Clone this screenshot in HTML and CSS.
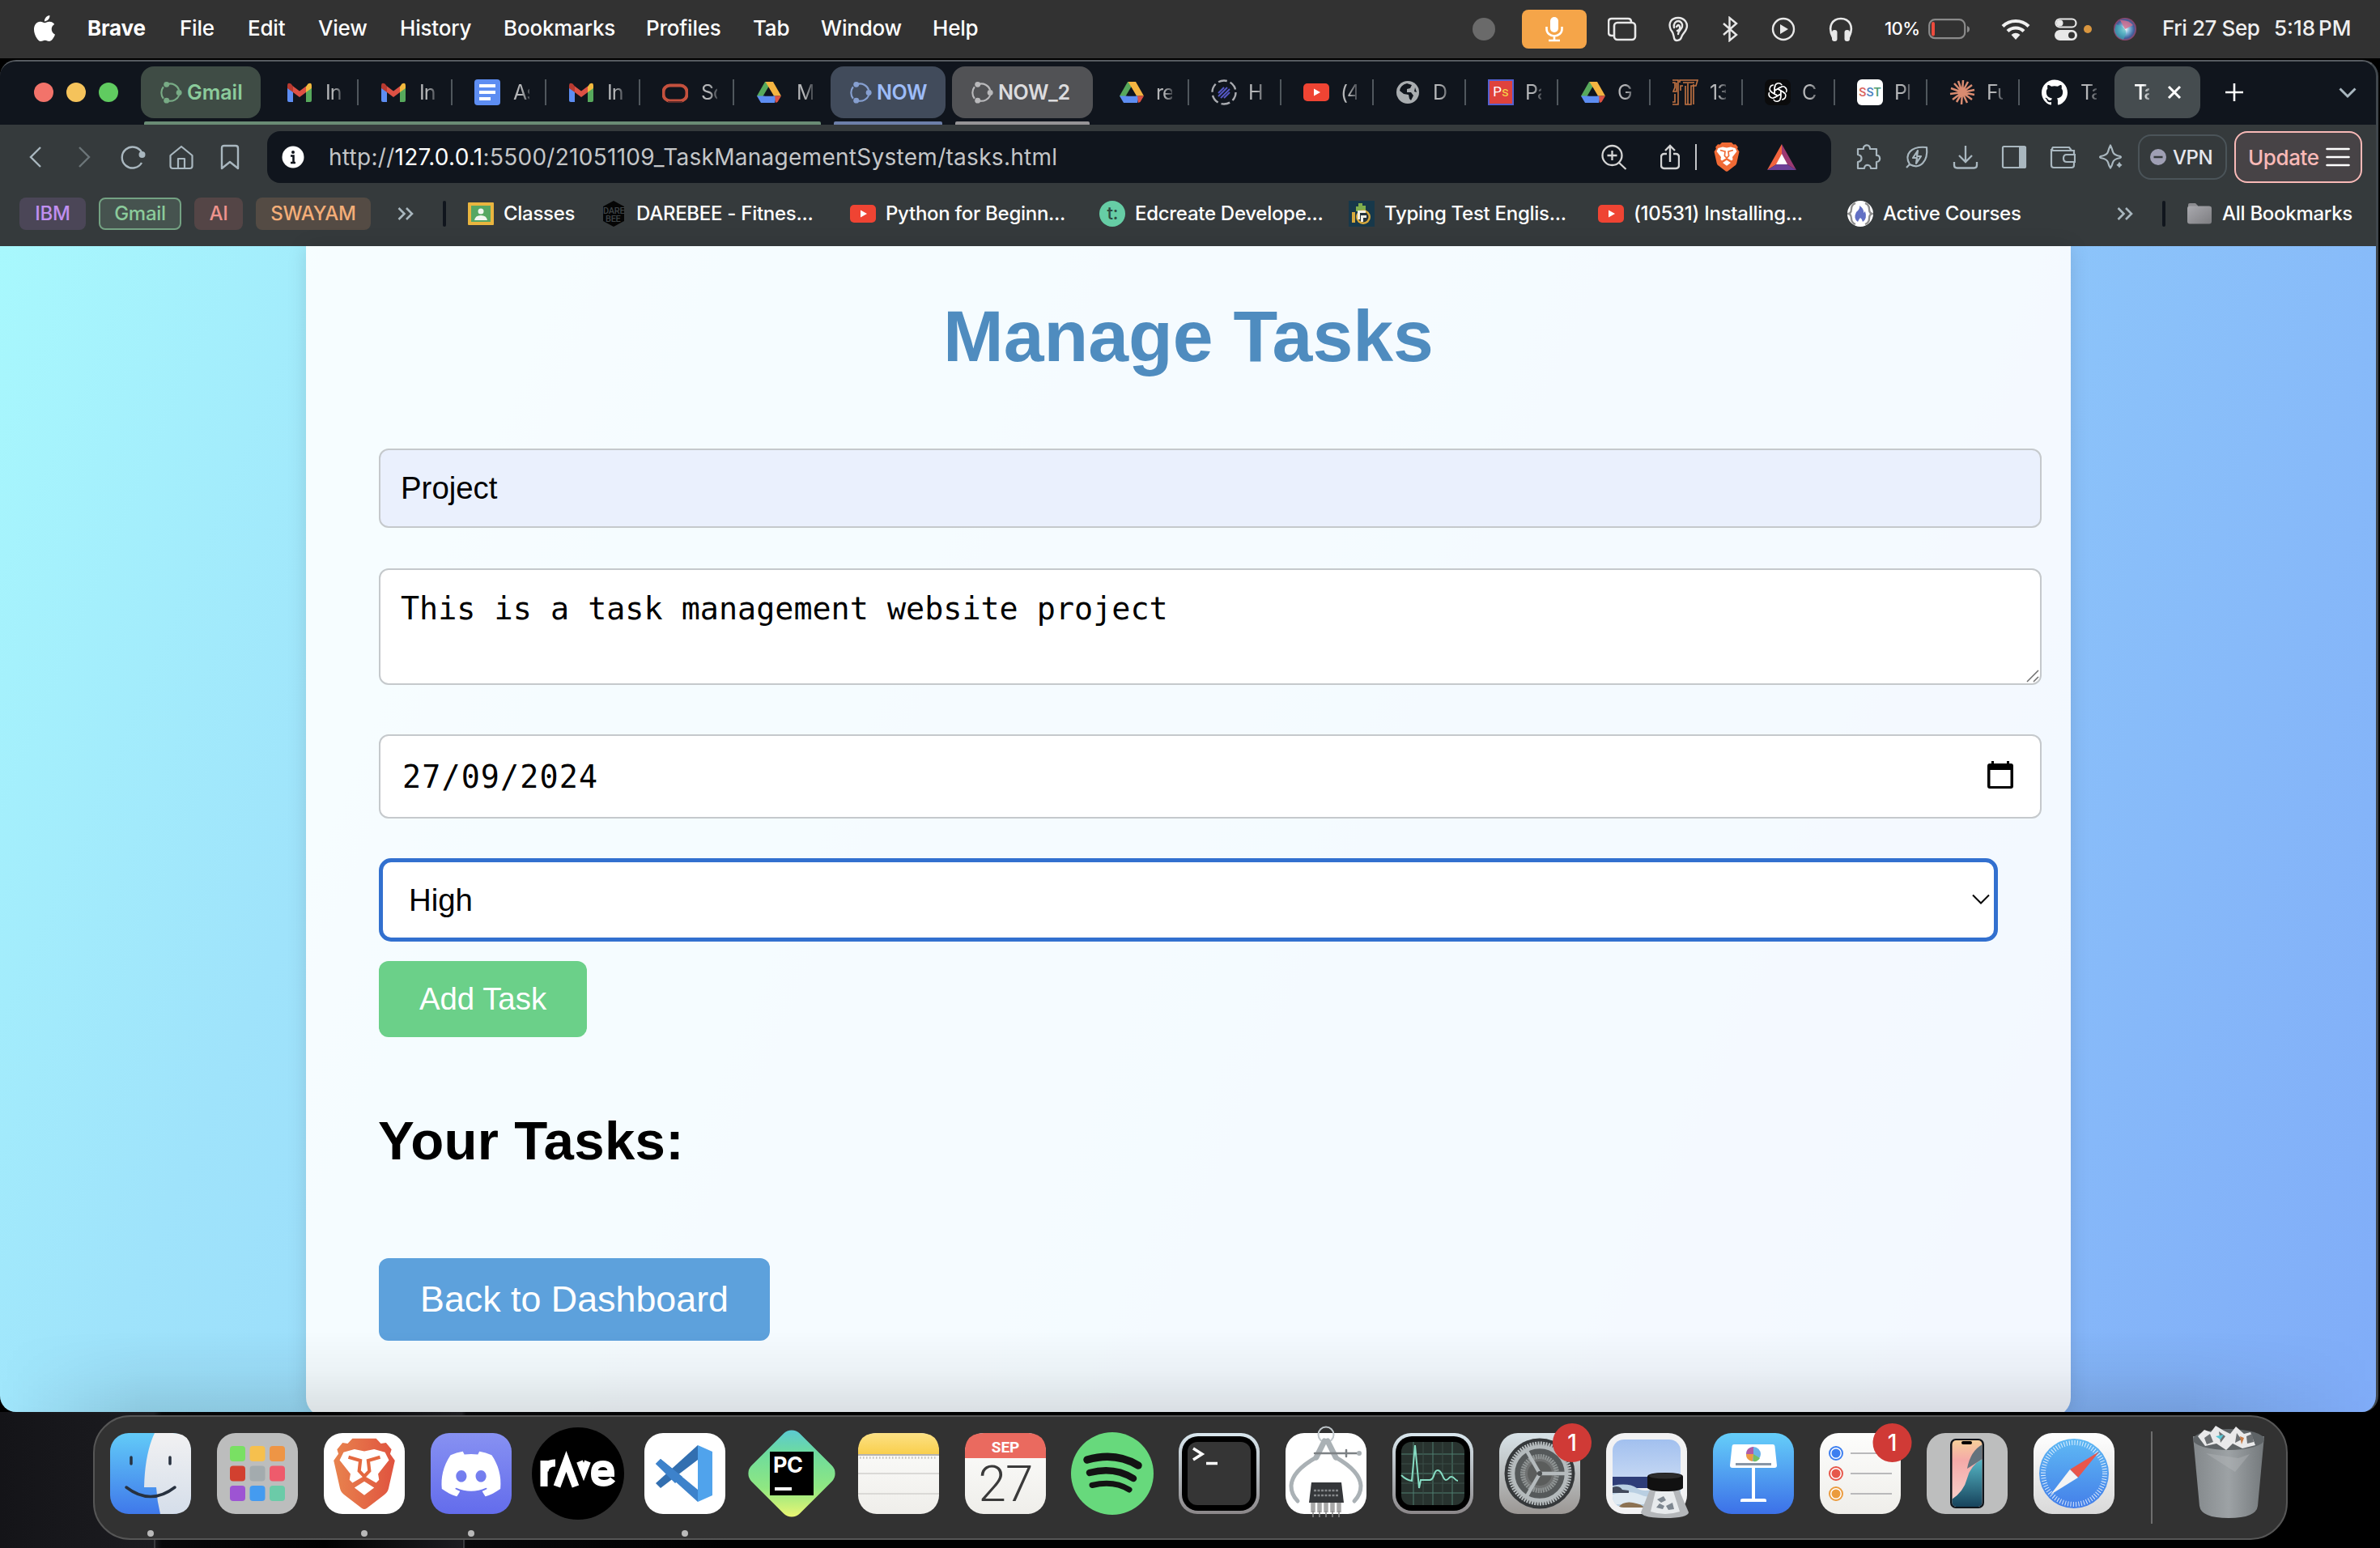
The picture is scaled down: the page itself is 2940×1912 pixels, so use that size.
FILE: index.html
```html
<!DOCTYPE html>
<html lang="en">
<head>
<meta charset="utf-8">
<title>Manage Tasks</title>
<link rel="stylesheet" href="styles.css">
</head>
<body>
<svg class="defs" width="0" height="0">
  <defs>
    <linearGradient id="gLion" x1="0" x2="1"><stop offset="0" stop-color="#e8834e"/><stop offset="1" stop-color="#e0533f"/></linearGradient>
    <linearGradient id="gFinder" x2="0" y2="1"><stop offset="0" stop-color="#62cbf8"/><stop offset="1" stop-color="#3f78ea"/></linearGradient>
    <linearGradient id="gFace" x2="0" y2="1"><stop offset="0" stop-color="#f1f1f2"/><stop offset="1" stop-color="#d5deea"/></linearGradient>
    <linearGradient id="gDiscord" x2="0" y2="1"><stop offset="0" stop-color="#8791f2"/><stop offset="1" stop-color="#636cec"/></linearGradient>
    <linearGradient id="gPy" x2="1" y2="1"><stop offset="0" stop-color="#57c6dc"/><stop offset=".3" stop-color="#6fdc9c"/><stop offset=".65" stop-color="#8fe782"/><stop offset="1" stop-color="#f9f871"/></linearGradient>
    <linearGradient id="gPaper" x2="0" y2="1"><stop offset="0" stop-color="#fdfdfc"/><stop offset="1" stop-color="#efeeea"/></linearGradient>
    <linearGradient id="gYellow" x2="0" y2="1"><stop offset="0" stop-color="#fce185"/><stop offset="1" stop-color="#f9cf4d"/></linearGradient>
    <linearGradient id="gRim" x2="0" y2="1"><stop offset="0" stop-color="#d9e7ee"/><stop offset="1" stop-color="#8b8789"/></linearGradient>
    <linearGradient id="gSet" x2="0" y2="1"><stop offset="0" stop-color="#d8e3e8"/><stop offset="1" stop-color="#9b9794"/></linearGradient>
    <linearGradient id="gKey" x2="0" y2="1"><stop offset="0" stop-color="#65cef9"/><stop offset="1" stop-color="#3c70e8"/></linearGradient>
    <linearGradient id="gPhoneL" x2="0" y2="1"><stop offset="0" stop-color="#f6cf9a"/><stop offset=".3" stop-color="#f5aaa8"/><stop offset="1" stop-color="#f8d3cf"/></linearGradient>
    <linearGradient id="gPhoneR" x2="0" y2="1"><stop offset="0" stop-color="#56b7c6"/><stop offset="1" stop-color="#16415a"/></linearGradient>
    <linearGradient id="gSaf" x2="0" y2="1"><stop offset="0" stop-color="#5fb9f4"/><stop offset="1" stop-color="#447fe9"/></linearGradient>
    <linearGradient id="gSafBg" x2="0" y2="1"><stop offset="0" stop-color="#fff"/><stop offset="1" stop-color="#d9d9d9"/></linearGradient>
    <linearGradient id="gBin" x1="0" x2="1"><stop offset="0" stop-color="#83888b"/><stop offset=".5" stop-color="#9da2a5"/><stop offset="1" stop-color="#74797c"/></linearGradient>
    <linearGradient id="gSky" x2="0" y2="1"><stop offset="0" stop-color="#a2c0ef"/><stop offset="1" stop-color="#c4d7f3"/></linearGradient>
    <linearGradient id="gFolder" x1="0" x2="1" y2="1"><stop offset="0" stop-color="#a9a9ae"/><stop offset="1" stop-color="#7d7d81"/></linearGradient>
    <radialGradient id="gSiri"><stop offset="0" stop-color="#fff"/><stop offset=".4" stop-color="#7fb4d8"/><stop offset=".8" stop-color="#3f5f9b"/><stop offset="1" stop-color="#9a4368"/></radialGradient>
  </defs>
  <symbol id="lion" viewBox="0 0 32 36">
    <path d="M10 0h12l2.400 2.600L27 2.200l2.800 3.400-.7 2.200 2.400 3.400-3.200 14.200c-.4 1.600-1.200 2.500-2.400 3.400L17.200 35.400c-.8.6-1.600.6-2.400 0L6.100 28.800c-1.200-.9-2-1.800-2.400-3.400L.5 11.200l2.400-3.400-.7-2.200L5 2.200l2.600.4z"/>
    <path fill="#fff" d="M11 5.500l5 1 5-1 5.500 1.500 2 4-5.500 7 .5 3-1.500 1.500-6-3.500-6 3.500L8.500 21l.5-3-5.500-7 2-4zM11 25l5-3.200L21 25l-5 3.800z"/>
    <path fill="none" stroke="currentColor" stroke-width="1.700" d="M8 9.500l6 1.700-.6 5.300L16 19.200l2.600-2.700-.6-5.300 6-1.700M16 19v2"/>
  </symbol>
  <symbol id="gmail" viewBox="0 0 30 24"><path fill="#5d8df2" d="M0 4v18q0 2 2 2h5V10z"/><path fill="#57a95c" d="M30 4v18q0 2-2 2h-5V10z"/><path fill="#f3b93d" d="M23 5l2.500-3.500Q30-1 30 4l-.1 3L23 12z"/><path fill="#dd5144" d="M7 12V4.500l8 6 8-6V12l-8 6z"/><path fill="#b83a30" d="M0 4Q0-1 4.500 1.500L7 4.500V12L0 7z"/></symbol>
  <symbol id="docs" viewBox="0 0 32 32"><rect width="32" height="32" rx="4" fill="#5d8df2"/><path stroke="#fff" stroke-width="4" d="M6 8h20M6 16h20M6 24h14"/></symbol>
  <symbol id="oracle" viewBox="0 0 32 32"><rect x="1.500" y="7.500" width="29" height="19" rx="8" fill="none" stroke="#c4513e" stroke-width="4"/><path d="M7 28h18" stroke="#5c2b29" stroke-width="2"/></symbol>
  <symbol id="drive" viewBox="0 0 30 26"><path fill="#57a95c" d="M10 0h8L5 22 0 17.500z"/><path fill="#f4b441" d="M10.500 0H20l10 17.500h-9z"/><path fill="#5d8df2" d="M0 17.500h24L22 26H5z"/><path fill="#dd5144" d="M22 17.500h8L25.500 25 23 26z"/><path fill="#10151d" d="M15 8l5 9.500H9.500z"/></symbol>
  <symbol id="ring" viewBox="0 0 28 28"><g fill="none" stroke="currentColor" stroke-width="2.200"><path d="M9.500 3.500A12 12 0 0 1 24 11M24 18a12 12 0 0 1-13 7M4 22A12 12 0 0 1 4 7"/></g><g fill="currentColor"><circle cx="8" cy="4" r="3.600"/><circle cx="24" cy="14.500" r="3.600"/><circle cx="8" cy="24.500" r="3.600"/></g></symbol>
  <symbol id="dash" viewBox="0 0 32 32"><circle cx="16" cy="16" r="14.500" fill="none" stroke="#a9abb0" stroke-width="2.400" stroke-dasharray="11 4.180"/><path d="M9 17l7-7M9 21L20 10M12 23L23 12M16 23l7-7" stroke="#5457c4" stroke-width="2"/></symbol>
  <symbol id="yt" viewBox="0 0 32 22"><rect width="32" height="22" rx="5" fill="#ef4433"/><path fill="#fff" d="M13 6.500l8 4.500-8 4.500z"/></symbol>
  <symbol id="globe" viewBox="0 0 28 28"><circle cx="14" cy="14" r="14" fill="#a9adb0"/><path fill="#10151d" d="M13 3l6 2-2 4-4 1v4l5 0 3 4-3 6-2-2-1-5-6-1-5-4q1-7 9-9zM23 8l2 6-3-1z"/></symbol>
  <symbol id="it" viewBox="0 0 32 32"><path fill="none" stroke="#c37443" stroke-width="1.600" d="M0 1h7v30H0M0 4h3v6l-2 5h4V4M3 18v10H0M10 14V8h3M9 4V1h22l-2 7h-6v23h-7V8M13 4h14M19 31V5M26 6v25"/></symbol>
  <symbol id="gpt" viewBox="0 0 32 32"><rect width="32" height="32" rx="7" fill="#0b0b0c"/><g fill="none" stroke="#fff" stroke-width="1.500" stroke-linecap="round"><path id="petal" d="M12.300 18.100V9.500a4.800 4.800 0 0 1 8.600-2.900M12.300 13.800l6.300-3.700a4.800 4.800 0 0 1 2.300-.6"/><use href="#petal" transform="rotate(60 16 16)"/><use href="#petal" transform="rotate(120 16 16)"/><use href="#petal" transform="rotate(180 16 16)"/><use href="#petal" transform="rotate(240 16 16)"/><use href="#petal" transform="rotate(300 16 16)"/></g></symbol>
  <symbol id="burst" viewBox="-16 -16 32 32"><path stroke="#d98b70" stroke-width="2.500" d="M0 0L1-15M0 0l7-13M0 0l12-9M0 0l15-3M0 0l15 3M0 0l12 9M0 0l6 13M0 0l-1 15M0 0l-7 12M0 0l-12 9M0 0l-15 2M0 0l-14-5M0 0L-10-11M0 0l-5-14"/></symbol>
  <symbol id="github" viewBox="0 0 24 24"><path fill="#fff" d="M12 .297c-6.63 0-12 5.373-12 12 0 5.303 3.438 9.8 8.205 11.385.6.113.82-.258.82-.577 0-.285-.01-1.040-.015-2.040-3.338.724-4.042-1.610-4.042-1.610C4.422 18.070 3.633 17.700 3.633 17.700c-1.087-.744.084-.729.084-.729 1.205.084 1.838 1.236 1.838 1.236 1.070 1.835 2.809 1.305 3.495.998.108-.776.417-1.305.760-1.605-2.665-.3-5.466-1.332-5.466-5.930 0-1.310.465-2.380 1.235-3.220-.135-.303-.540-1.523.105-3.176 0 0 1.005-.322 3.300 1.230.960-.267 1.980-.399 3-.405 1.020.006 2.040.138 3 .405 2.280-1.552 3.285-1.230 3.285-1.230.645 1.653.240 2.873.120 3.176.765.840 1.230 1.910 1.230 3.220 0 4.610-2.805 5.625-5.475 5.920.420.360.810 1.096.810 2.220 0 1.606-.015 2.896-.015 3.286 0 .315.210.690.825.570C20.565 22.092 24 17.592 24 12.297c0-6.627-5.373-12-12-12"/></symbol>
  <symbol id="more" viewBox="0 0 20 16"><path fill="none" stroke="#a9b7bf" stroke-width="2.600" d="M1.500 1l7 7-7 7M11 1l7 7-7 7"/></symbol>
</svg>

<header class="menubar">
  <svg class="apple" width="32" height="32" viewBox="0 0 24 24"><path fill="#fff" d="M12.152 6.896c-.948 0-2.415-1.078-3.960-1.040-2.040.027-3.910 1.183-4.961 3.014-2.117 3.675-.546 9.103 1.519 12.090 1.013 1.454 2.208 3.090 3.792 3.039 1.520-.065 2.090-.987 3.935-.987 1.831 0 2.350.987 3.960.948 1.637-.026 2.676-1.480 3.676-2.948 1.156-1.688 1.636-3.325 1.662-3.415-.039-.013-3.182-1.221-3.220-4.857-.026-3.040 2.480-4.494 2.597-4.559-1.429-2.090-3.623-2.324-4.390-2.376-2-.156-3.675 1.090-4.610 1.090zM15.530 3.830c.843-1.012 1.400-2.427 1.245-3.830-1.207.052-2.662.805-3.532 1.818-.780.896-1.454 2.338-1.273 3.714 1.338.104 2.715-.688 3.559-1.701"/></svg>
  <b>Brave</b><span>File</span><span>Edit</span><span>View</span><span>History</span><span>Bookmarks</span><span>Profiles</span><span>Tab</span><span>Window</span><span>Help</span>
  <i class="idle"></i>
  <div class="mic"><svg width="26" height="32" viewBox="0 0 26 32"><rect x="8" y="1" width="10" height="19" rx="5" fill="#fff"/><path fill="none" stroke="#fff" stroke-width="2.600" d="M3.500 13v3a9.500 8.500 0 0 0 19 0v-3M13 24v6M6 30h14"/></svg></div>
  <svg width="36" height="30" viewBox="0 0 36 30"><g fill="none" stroke="#e8e8e8" stroke-width="2.600"><path d="M7 23H5q-4 0-4-4V6q0-4 4-4h20q4 0 4 4"/><rect x="8" y="7" width="26" height="21" rx="4"/></g></svg>
  <svg width="26" height="32" viewBox="0 0 26 32"><g fill="none" stroke="#e8e8e8" stroke-width="2.400" stroke-linecap="round"><path d="M4 17C0 8 5 2 13 2s13 7 10 14c-2 5-5 6-6 10s-8 6-9 1-1-7-4-10"/><path d="M8 14c-1-5 2-8 5-8s6 3 5 7-5 5-5 9M11 13q3-4 4 0t-3 5"/></g></svg>
  <svg width="24" height="32" viewBox="0 0 24 32"><path fill="none" stroke="#e8e8e8" stroke-width="2.400" d="M4 9l16 14-8.500 7V2L20 9 4 23"/></svg>
  <svg width="30" height="30" viewBox="0 0 30 30"><circle cx="15" cy="15" r="13" fill="none" stroke="#e8e8e8" stroke-width="2.400"/><path fill="#e8e8e8" d="M11 9l10 6-10 6z"/></svg>
  <svg width="30" height="32" viewBox="0 0 30 32"><path fill="none" stroke="#e8e8e8" stroke-width="2.600" d="M5 26C-2 12 5 3 15 3s17 9 10 23"/><rect x="4" y="17" width="6.500" height="14" rx="3" fill="#e8e8e8"/><rect x="19.500" y="17" width="6.500" height="14" rx="3" fill="#e8e8e8"/></svg>
  <span class="pct">10%</span>
  <svg width="52" height="26" viewBox="0 0 52 26"><rect x="1.200" y="1.200" width="44" height="23" rx="7" fill="none" stroke="#8b8b8b" stroke-width="2.200"/><rect x="4" y="4" width="4" height="17.500" rx="2" fill="#ed4b3d"/><path d="M48 9q3 1 3 4t-3 4z" fill="#8b8b8b"/></svg>
  <svg width="36" height="28" viewBox="0 0 36 28"><g fill="none" stroke="#f0f0f0" stroke-width="4.200"><path d="M2 10.500a23 23 0 0 1 32 0M8 16.500a14.500 14.500 0 0 1 20 0"/></g><path fill="#f0f0f0" d="M12.500 21q5.500-4.500 11 0L18 27z"/></svg>
  <svg width="28" height="30" viewBox="0 0 28 30"><rect x="1.500" y="2.500" width="25" height="10" rx="5" fill="none" stroke="#e8e8e8" stroke-width="2.200"/><circle cx="6.500" cy="7.500" r="4" fill="#e8e8e8"/><rect y="16" width="28" height="13" rx="6.500" fill="#e8e8e8"/><circle cx="21" cy="22.500" r="4" fill="#323232"/></svg>
  <i class="amber"></i>
  <svg width="28" height="28" viewBox="0 0 28 28"><circle cx="14" cy="14" r="14" fill="url(#gSiri)"/><path d="M3 8q8 2 11 6T12 27Q2 24 1 15z" fill="#3fb0b5" opacity=".6"/><path d="M8 3q10-1 16 6l-10 5z" fill="#d66b8c" opacity=".8"/></svg>
  <span class="clock">Fri 27 Sep</span><span class="clock time">5:18 PM</span>
</header>

<main class="window">
  <div class="tabstrip">
    <div class="lights"><i></i><i></i><i></i></div>
    <div class="pill green"><svg width="27" height="28"><use href="#ring"/></svg>Gmail</div>
    <div class="tabs first">
      <div class="tab"><svg width="30" height="24"><use href="#gmail"/></svg><span>In</span></div>
      <div class="tab"><svg width="30" height="24"><use href="#gmail"/></svg><span>In</span></div>
      <div class="tab"><svg width="32" height="32"><use href="#docs"/></svg><span>As</span></div>
      <div class="tab"><svg width="30" height="24"><use href="#gmail"/></svg><span>In</span></div>
      <div class="tab"><svg width="32" height="32"><use href="#oracle"/></svg><span>Sc</span></div>
      <div class="tab"><svg width="30" height="26"><use href="#drive"/></svg><span>M</span></div>
    </div>
    <div class="pill blue"><svg width="27" height="28"><use href="#ring"/></svg>NOW</div>
    <div class="pill grey"><svg width="27" height="28"><use href="#ring"/></svg>NOW_2</div>
    <div class="tabs second">
      <div class="tab"><svg width="30" height="26"><use href="#drive"/></svg><span>re</span></div>
      <div class="tab"><svg width="32" height="32"><use href="#dash"/></svg><span>H</span></div>
      <div class="tab"><svg width="32" height="22"><use href="#yt"/></svg><span>(4</span></div>
      <div class="tab"><svg width="28" height="28"><use href="#globe"/></svg><span>D</span></div>
      <div class="tab"><div class="ps"><em>P</em>s</div><span>Pa</span></div>
      <div class="tab"><svg width="30" height="26"><use href="#drive"/></svg><span>G</span></div>
      <div class="tab"><svg width="32" height="32"><use href="#it"/></svg><span>13</span></div>
      <div class="tab"><svg width="32" height="32"><use href="#gpt"/></svg><span>C</span></div>
      <div class="tab"><div class="sst"><b>S</b><b>S</b><b>T</b></div><span>Pl</span></div>
      <div class="tab"><svg width="32" height="32"><use href="#burst"/></svg><span>Fu</span></div>
      <div class="tab"><svg width="32" height="32"><use href="#github"/></svg><span>Ta</span></div>
    </div>
    <div class="active"><span>Ta</span><svg width="18" height="18" viewBox="0 0 18 18"><path stroke="#fff" stroke-width="3" d="M2 2l14 14M16 2L2 16"/></svg></div>
    <svg class="plus" width="22" height="22" viewBox="0 0 22 22"><path stroke="#fff" stroke-width="2.600" d="M11 0v22M0 11h22"/></svg>
    <svg class="caret" width="22" height="14" viewBox="0 0 22 14"><path fill="none" stroke="#a9b7bf" stroke-width="3" d="M1.500 1.500L11 11l9.500-9.500"/></svg>
  </div>

  <div class="toolbar">
    <svg width="32" height="32" viewBox="0 0 32 32"><path fill="none" stroke="#a9b7bf" stroke-width="2.400" d="M22 4L10 16l12 12"/></svg>
    <svg width="32" height="32" viewBox="0 0 32 32"><path fill="none" stroke="#6c7579" stroke-width="2.400" d="M10 4l12 12-12 12"/></svg>
    <svg width="32" height="32" viewBox="0 0 32 32"><path fill="none" stroke="#a9b7bf" stroke-width="2.400" d="M27 10A13 13 0 1 0 27 23"/><circle cx="27.500" cy="13" r="4" fill="#a9b7bf"/></svg>
    <svg width="32" height="32" viewBox="0 0 32 32"><path fill="none" stroke="#a9b7bf" stroke-width="2.200" stroke-linejoin="round" d="M2.500 14L16 3l13.500 11v13q0 3-3 3h-21q-3 0-3-3zM12 30V18h8v12"/></svg>
    <svg width="32" height="32" viewBox="0 0 32 32"><path fill="none" stroke="#a9b7bf" stroke-width="2.400" stroke-linejoin="round" d="M6 30V5q0-3 3-3h14q3 0 3 3v25l-10-8z"/></svg>
    <div class="urlbar">
      <svg width="28" height="28" viewBox="0 0 28 28"><circle cx="14" cy="14" r="13.500" fill="#fff"/><circle cx="14" cy="8" r="2" fill="#10151d"/><path fill="none" stroke="#10151d" stroke-width="2.600" d="M11 12.500h3.500V21M11 21h6"/></svg>
      <span class="url">http://<b>127.0.0.1</b>:5500/21051109_TaskManagementSystem/tasks.html</span>
      <svg width="32" height="32" viewBox="0 0 32 32"><g fill="none" stroke="#d4d4d4" stroke-width="2.300"><circle cx="13.500" cy="14" r="12"/><path d="M22 23l8.500 8M7.500 14h12M13.500 8v12"/></g></svg>
      <svg width="24" height="32" viewBox="0 0 24 32"><path fill="none" stroke="#d4d4d4" stroke-width="2.400" d="M8 12H5q-4 0-4 4v10q0 4 4 4h14q4 0 4-4V16q0-4-4-4h-3M12 22V2M6 8l6-6 6 6"/></svg>
      <i class="sep"></i>
      <svg class="lion" width="32" height="36"><use href="#lion"/></svg>
      <svg width="36" height="32" viewBox="0 0 36 32"><path fill="#f2643e" d="M18 0v13L11.500 25 0 32z"/><path fill="#9c3a73" d="M18 0l18 32-11.500-7L18 13z"/><path fill="#6c4197" d="M0 32l11.500-7h13L36 32z"/><path fill="#fff" d="M18 12l7 13H11z"/></svg>
    </div>
    <svg width="32" height="32" viewBox="0 0 32 32"><path fill="none" stroke="#a9b7bf" stroke-width="2.200" stroke-linejoin="round" d="M3 6h7c-1-5 7-7 8-1v1h8v8c5-1 6 8 0 8v8h-7c0-5-8-6-8 0H3v-8c6-1 6-8 0-9z"/></svg>
    <svg width="32" height="32" viewBox="0 0 32 32"><path fill="none" stroke="#a9b7bf" stroke-width="2.200" stroke-linejoin="round" d="M3 29l4-4C0 13 8 2 28 4c2 17-8 28-21 21M17 8l-6 9h5l-1 7 6-9h-5z"/></svg>
    <svg width="32" height="32" viewBox="0 0 32 32"><path fill="none" stroke="#a9b7bf" stroke-width="2.300" d="M16 2v19M8 14l8 8 8-8M2 22v4q0 3.500 3.500 3.500h21Q30 29.500 30 26v-4"/></svg>
    <svg width="32" height="32" viewBox="0 0 32 32"><rect x="2" y="3" width="28" height="26" rx="1.500" fill="none" stroke="#a9b7bf" stroke-width="2.200"/><path fill="#a9b7bf" d="M22 3h9v26h-9z"/></svg>
    <svg width="32" height="32" viewBox="0 0 32 32"><g fill="none" stroke="#a9b7bf" stroke-width="2.200"><path d="M30 12V8H4q-2-2 0-4h20l3 4M2 6v20q0 3 3 3h22q3 0 3-3v-4"/><path d="M31 13H21q-4 0-4 4.500t4 4.500h10z"/></g></svg>
    <svg width="32" height="32" viewBox="0 0 32 32"><path fill="none" stroke="#a9b7bf" stroke-width="2.200" stroke-linejoin="round" d="M15 1.500q2 4 3 8t9 5.500q2 1 0 2-8 1.500-9 5.500t-3 7q-2-3-3-7T3 17q-2-1 0-2 8-1.500 9-5.500t3-8z"/><path fill="#a9b7bf" stroke="#353a3c" stroke-width="1.500" d="M26 19q1 6 6 7-5 1-6 6-1-5-6-6 5-1 6-7z"/></svg>
    <div class="vpn"><svg width="20" height="20" viewBox="0 0 20 20"><circle cx="10" cy="10" r="10" fill="#9f9fb4"/><path d="M4.500 10h11" stroke="#353a3c" stroke-width="2.400"/></svg>VPN</div>
    <div class="update">Update<svg width="30" height="24" viewBox="0 0 30 24"><path stroke="#fff" stroke-width="2.600" stroke-linecap="round" d="M1.500 2h27M1.500 12h27M1.500 22h27"/></svg></div>
  </div>

  <div class="bookmarks">
    <span class="tag ibm">IBM</span><span class="tag gm">Gmail</span><span class="tag ai">AI</span><span class="tag sw">SWAYAM</span>
    <svg width="20" height="16"><use href="#more"/></svg>
    <i></i>
    <a><svg width="32" height="28" viewBox="0 0 32 28"><rect width="32" height="28" rx="1" fill="#e9b53f"/><rect x="4" y="4" width="24" height="20" fill="#56a763"/><circle cx="16" cy="11" r="3.500" fill="#f1f6f1"/><path fill="#f1f6f1" d="M8 22q1-6 8-6t8 6z"/></svg>Classes</a>
    <a><svg width="32" height="32" viewBox="0 0 32 32"><path fill="#050505" d="M16 0l13 7v18l-13 7-13-7V7z"/><g font-family="Roboto, sans-serif" font-size="11" fill="#3d4346"><text x="3" y="16">DARE</text><text x="6" y="26">BEE</text></g></svg>DAREBEE - Fitnes...</a>
    <a><svg width="32" height="22"><use href="#yt"/></svg>Python for Beginn...</a>
    <a><svg width="32" height="32" viewBox="0 0 32 32"><circle cx="16" cy="16" r="16" fill="#66cda5"/><text x="9.500" y="23" font-family="Inter, sans-serif" font-size="22" fill="#2d4a40">t:</text></svg>Edcreate Develope...</a>
    <a><svg width="32" height="32" viewBox="0 0 32 32"><path fill="#17384a" d="M0 0h32v32H0z"/><path fill="#7fae4d" d="M9 13V7h3V3h5v3h4v7z"/><path fill="#d8a93c" d="M4 14h4v13H4z"/><circle cx="18" cy="20" r="9" fill="#d8a93c"/><circle cx="18" cy="20" r="6.500" fill="#24323a"/><path fill="#f2efe5" d="M11 12h3v11h-3zM14 12h7v3h-7zM15 18h7v3h-4v5h-3z"/></svg>Typing Test Englis...</a>
    <a><svg width="32" height="22"><use href="#yt"/></svg>(10531) Installing...</a>
    <a><svg width="32" height="32" viewBox="0 0 32 32"><circle cx="16" cy="16" r="16" fill="#fff"/><path fill="none" stroke="#8d8d8d" stroke-width="2.400" d="M10 3Q5 5 5 10t-3.500 6Q5 17 5 22t5 7M22 3q5 2 5 7t3.500 6Q27 17 27 22t-5 7"/><path fill="#6270c4" d="M15 6q6 4 5 9l2-2q3 9-3 13-1-4-3-5-2 2-3 5-6-4-2-12 5-4 4-8z"/></svg>Active Courses</a>
    <svg width="20" height="16"><use href="#more"/></svg>
    <i></i>
    <a class="all"><svg width="30" height="26" viewBox="0 0 30 26"><path fill="#8b8b8f" d="M1 2q0-2 2-2h7l3 3v4H1z"/><rect y="3.500" width="30" height="22" rx="3" fill="url(#gFolder)"/></svg>All Bookmarks</a>
  </div>

  <section class="page">
    <div class="card">
      <h1>Manage Tasks</h1>
      <input class="field name" type="text" value="Project">
      <div class="area">
        <textarea class="field">This is a task management website project</textarea>
        <svg width="16" height="16" viewBox="0 0 16 16"><path stroke="#6d6d6d" stroke-width="1.500" d="M1 15L15 1M9 15l6-6"/></svg>
      </div>
      <div class="field date"><span>27/09/2024</span><svg width="32" height="36" viewBox="0 0 32 36"><path d="M5 0h3v3h16V0h3v3h2q3 0 3 3v25q0 3-3 3H3q-3 0-3-3V6q0-3 3-3h2zM3.500 11v20h25V11z"/></svg></div>
      <div class="field select"><span>High</span><svg width="22" height="14" viewBox="0 0 22 14"><path fill="none" stroke="#000" stroke-width="2" d="M1 1.500l10 10 10-10"/></svg></div>
      <button class="add">Add Task</button>
      <h2>Your Tasks:</h2>
      <a class="back">Back to Dashboard</a>
    </div>
  </section>
</main>

<footer class="desktop">
  <nav class="dock">
    <svg viewBox="-66 -70 132 150"><rect x="-50" y="-50" width="100" height="100" rx="23" fill="url(#gFinder)"/><path fill="url(#gFace)" d="M5-50h22q23 0 23 23v54q0 23-23 23H12Q8 34 7 17H-8Q-7-25 5-50z"/><path fill="none" stroke="#27313f" stroke-width="3.500" stroke-linecap="round" d="M-24-20v8M24-20v8M-30 17Q0 40 30 17"/><circle class="run" cy="74" r="4"/></svg>
    <svg viewBox="-66 -70 132 150"><rect x="-50" y="-50" width="100" height="100" rx="23" fill="#bcbdbd"/><rect x="-34" y="-34" width="19" height="19" rx="4" fill="#79e063"/><rect x="-9.500" y="-34" width="19" height="19" rx="4" fill="#f6c04e"/><rect x="15" y="-34" width="19" height="19" rx="4" fill="#ee9545"/><rect x="-34" y="-9.500" width="19" height="19" rx="4" fill="#d2402f"/><rect x="-9.500" y="-9.500" width="19" height="19" rx="4" fill="#a3abae"/><rect x="15" y="-9.500" width="19" height="19" rx="4" fill="#ee5b6c"/><rect x="-34" y="15" width="19" height="19" rx="4" fill="#9d54d3"/><rect x="-9.500" y="15" width="19" height="19" rx="4" fill="#449bf0"/><rect x="15" y="15" width="19" height="19" rx="4" fill="#6bcba8"/></svg>
    <svg viewBox="-66 -70 132 150"><rect x="-50" y="-50" width="100" height="100" rx="23" fill="#fff"/><g fill="url(#gLion)" color="#e4683f"><use href="#lion" x="-39" y="-44" width="78" height="89"/></g><circle class="run" cy="74" r="4"/></svg>
    <svg viewBox="-66 -70 132 150"><rect x="-50" y="-50" width="100" height="100" rx="23" fill="url(#gDiscord)"/><path fill="#fff" transform="translate(-36.500 -36) scale(3.040)" d="M20.317 4.370a19.791 19.791 0 0 0-4.885-1.515.074.074 0 0 0-.079.037c-.211.375-.445.865-.608 1.250-1.845-.276-3.680-.276-5.487 0-.164-.393-.406-.874-.618-1.250a.077.077 0 0 0-.079-.037 19.736 19.736 0 0 0-4.885 1.515.070.070 0 0 0-.032.028C.533 9.046-.319 13.580.099 18.058a.082.082 0 0 0 .031.056c2.053 1.508 4.041 2.423 5.993 3.029a.078.078 0 0 0 .084-.028c.462-.630.873-1.295 1.226-1.994a.076.076 0 0 0-.042-.106c-.653-.248-1.274-.550-1.872-.892a.077.077 0 0 1-.008-.128c.126-.094.252-.192.372-.291a.074.074 0 0 1 .078-.011c3.928 1.793 8.180 1.793 12.061 0a.074.074 0 0 1 .079.010c.120.099.246.198.373.292a.077.077 0 0 1-.007.128 12.299 12.299 0 0 1-1.873.891.077.077 0 0 0-.041.107c.360.698.772 1.363 1.225 1.993a.076.076 0 0 0 .084.029c1.961-.607 3.950-1.522 6.002-3.029a.077.077 0 0 0 .031-.055c.500-5.177-.838-9.674-3.549-13.660a.061.061 0 0 0-.031-.029zM8.020 15.331c-1.183 0-2.157-1.086-2.157-2.419 0-1.333.956-2.419 2.157-2.419 1.211 0 2.176 1.095 2.157 2.419 0 1.333-.956 2.419-2.157 2.419zm7.975 0c-1.183 0-2.157-1.086-2.157-2.419 0-1.333.955-2.419 2.157-2.419 1.211 0 2.176 1.095 2.157 2.419 0 1.333-.946 2.419-2.157 2.419z"/><circle class="run" cy="74" r="4"/></svg>
    <svg viewBox="-66 -70 132 150"><circle r="57" fill="#000"/><g fill="none" stroke="#fff" stroke-width="9"><path d="M-42-16v32M-41-3q1-10 13-10M-26 16l11.500-31L-3 16"/><path stroke-width="8" d="M2-15l5 13 5-13"/><path d="M21 0h20q0-12-10-12-11 0-11 12 0 12 12 12 7 0 11-5" stroke-width="8"/></g></svg>
    <svg viewBox="-66 -70 132 150"><rect x="-50" y="-50" width="100" height="100" rx="23" fill="#fff"/><path fill="#3d82cb" d="M-36-12l6-6 46 38v15z"/><path fill="#326fb0" d="M-36 12l6 6L16-17v-18z"/><path fill="#3d82cb" d="M-36-12l6-6 27 22-9 8z"/><path fill="#50a3ec" d="M16-35l18 8v54l-18 8z"/><circle class="run" cy="74" r="4"/></svg>
    <svg viewBox="-66 -70 132 150"><rect x="-42" y="-42" width="84" height="84" rx="14" fill="url(#gPy)" transform="rotate(45)"/><path d="M-27-27h54v54h-54z"/><text x="-23" y="-1" class="pc">PC</text><path fill="#fff" d="M-21 17H0v4h-21z"/></svg>
    <svg viewBox="-66 -70 132 150"><rect x="-50" y="-50" width="100" height="100" rx="23" fill="url(#gPaper)"/><path fill="url(#gYellow)" d="M-50-24v-3q0-23 23-23h54q23 0 23 23v3z"/><path stroke="#b5b3ae" stroke-width="2" d="M-50-23H50"/><path stroke="#c2c0bb" stroke-width="2.500" stroke-dasharray="1.500 2.500" d="M-48-19.500H48"/><path stroke="#dad9d6" stroke-width="2" d="M-50 0H50M-50 25H50"/></svg>
    <svg viewBox="-66 -70 132 150"><rect x="-50" y="-50" width="100" height="100" rx="23" fill="url(#gPaper)"/><path fill="#ea6a5f" d="M-50-19v-8q0-23 23-23h54q23 0 23 23v8z"/><text x="0" y="-26.500" class="mon">SEP</text><text x="0" y="34" class="day">27</text></svg>
    <svg viewBox="-66 -70 132 150"><circle r="51" fill="#67d97c"/><g fill="none" stroke="#131313" stroke-linecap="round"><path stroke-width="9.500" d="M-31-17Q4-27 32-10"/><path stroke-width="8.500" d="M-28-1Q2-9 26 6"/><path stroke-width="7" d="M-25 14.500Q2 8 21 20"/></g></svg>
    <svg viewBox="-66 -70 132 150"><rect x="-50" y="-50" width="100" height="100" rx="23" fill="url(#gRim)"/><rect x="-46" y="-46" width="92" height="92" rx="20"/><rect x="-39" y="-39" width="78" height="78" rx="12" fill="#353535"/><path fill="none" stroke="#fff" stroke-width="3.500" d="M-32-31l11 7-11 7M-16-12.500h14"/></svg>
    <svg viewBox="-66 -70 132 150"><rect x="-50" y="-50" width="100" height="100" rx="23" fill="#fff"/><g fill="none" stroke="#aab1b5" stroke-linecap="round"><circle cy="-48" r="9.500" stroke-width="2" stroke="#bfc6ca"/><path stroke-width="7" d="M-2-40l-10 20M2-40l10 20"/><path stroke-width="5" d="M-12-20q-30 17-31 35 0 11 8 19M12-20q30 17 31 35 0 11-8 19"/><path stroke-width="2.500" stroke="#7c8184" d="M-14-25H41M25-29v8"/></g><circle cx="41" cy="-25" r="3" fill="#aab1b5"/><path stroke="#a7a7a7" stroke-width="5.500" d="M-16 35v13M-8 35v13M0 35v13M8 35v13M16 35v13"/><path stroke="#8b8b8b" stroke-width="1.500" d="M-16 46v8M-8 46v8M0 46v8M8 46v8M16 46v8"/><path fill="#35373a" d="M-18 11h37l3 25h-43z"/><path stroke="#85878a" stroke-width="2.500" stroke-dasharray="3 1.500" d="M-15 21h31M-15 27h31"/></svg>
    <svg viewBox="-66 -70 132 150"><rect x="-50" y="-50" width="100" height="100" rx="23" fill="url(#gRim)"/><rect x="-46" y="-46" width="92" height="92" rx="20"/><rect x="-39" y="-39" width="78" height="78" rx="12" fill="#28332f"/><path stroke="#4f7f70" stroke-width="1" d="M-24-39v78M0-39v78M24-39v78M-39-24h78M-39 0h78M-39 24h78"/><path stroke="#3a4f48" stroke-width="1" d="M-12-39v78M12-39v78M-39-12h78M-39 12h78"/><path fill="none" stroke="#86dcc3" stroke-width="2" d="M-39 2q6 6 13 7l4-44 5 53 2-10 11 0C3 8 0-4 6-4s6 12 10 12 3-4 7-4 4 5 8 5"/></svg>
    <svg viewBox="-66 -70 132 150"><rect x="-50" y="-50" width="100" height="100" rx="23" fill="url(#gSet)"/><circle r="43.500" fill="#35383a"/><circle r="37" fill="#777a7b" stroke="#b9bfc1" stroke-width="5" stroke-dasharray="2 1.300"/><circle r="33" fill="#55595a" stroke="#b4babc" stroke-width="4.500"/><circle r="21" fill="#6f7171" stroke="#8f9494" stroke-width="6" stroke-dasharray="2 1"/><circle r="15" fill="#5b5d5c"/><path stroke="#b4babc" stroke-width="4.500" d="M0 0h32M0 0l-16 28M0 0l-16-28"/><circle r="3" fill="#4c4f50"/><circle class="badge" cx="40" cy="-38" r="24"/><text class="n" x="40" y="-28.500">1</text></svg>
    <svg viewBox="-66 -70 132 150"><rect x="-50" y="-50" width="100" height="100" rx="23" fill="#f2f2f3"/><clipPath id="cp"><rect x="-42" y="-42" width="84" height="84" rx="14"/></clipPath><g clip-path="url(#cp)"><path fill="url(#gSky)" d="M-42-42h84V5h-84z"/><path fill="#2e3d78" d="M-42 4h84v14h-84z"/><path fill="#b9cfe2" d="M-42 15q20-4 30 3t30-2 24 2v26h-84z"/><path fill="#dfeaf2" d="M-42 26q20-6 34 0t40 4v8h-74z"/><path fill="#424a5c" d="M-42 17q8-3 12 3l8 1v3h-20z"/><path fill="#8c7253" d="M-35 42q6-8 18-6t14 6z"/></g><path fill="#b4b7ba" d="M4 20h36l12 28q-1 7-29 7t-30-7z"/><path fill="#e8ebed" d="M11 22h22l8 25q-18 6-36 0z"/><path fill="#7e8790" d="M13 32l8-4 3 5-6 3zM12 42l4-5 6 3-2 4zM24 40l8-4 2 8-7 1z"/><path fill="#111" d="M1 4q0-5 22-5t22 5v14q-4 4-22 4T1 18z"/><ellipse cx="23" cy="3" rx="20" ry="3.500" fill="#2c2c2c"/></svg>
    <svg viewBox="-66 -70 132 150"><rect x="-50" y="-50" width="100" height="100" rx="23" fill="url(#gKey)"/><path fill="#fff" d="M-24-36h48q2 0 2.400 2L29-10q0 3-3 3h-52q-3 0-3-3l2.600-24q.4-2 2.400-2zM-2-7h4v38h11q3 0 3 2v2h-32v-2q0-2 3-2h11z"/><path fill="#8796a6" d="M-22-13h44v3h-44z"/><circle cy="-24" r="9" fill="#6bb2e8"/><path fill="#74c064" d="M0-24l8 5q-3 5-8 4z"/><path fill="#ee9b42" d="M0-24l-1 9q-8-1-8-9z"/><path fill="#b35ba5" d="M0-24h-9q0-8 9-9z"/></svg>
    <svg viewBox="-66 -70 132 150"><rect x="-50" y="-50" width="100" height="100" rx="23" fill="url(#gPaper)"/><path stroke="#b9b9bb" stroke-width="2" d="M-12-25h51M-12 0h51M-12 25h51"/><g stroke-width="2" fill="#fff"><circle cx="-30" cy="-25" r="8" stroke="#3d7ff0"/><circle cx="-30" cy="0" r="8" stroke="#e6574a"/><circle cx="-30" cy="25" r="8" stroke="#eb9b3d"/></g><circle cx="-30" cy="-25" r="5.500" fill="#3d7ff0"/><circle cx="-30" r="5.500" fill="#e6574a"/><circle cx="-30" cy="25" r="5.500" fill="#eb9b3d"/><circle class="badge" cx="39.500" cy="-38" r="24"/><text class="n" x="39.500" y="-28.500">1</text></svg>
    <svg viewBox="-66 -70 132 150"><rect x="-50" y="-50" width="100" height="100" rx="23" fill="#bdbebe"/><rect x="-21" y="-43" width="42" height="86" rx="7" fill="#10151b"/><clipPath id="ph"><rect x="-18.500" y="-41" width="37" height="82" rx="5"/></clipPath><g clip-path="url(#ph)"><path fill="url(#gPhoneL)" d="M-19-41h38v82h-38z"/><path fill="#64737d" d="M19-36Q4-28 0-6l19-12z"/><path fill="url(#gPhoneR)" d="M19-18Q4-10 0 6T-19 32v10h38z"/></g><rect x="-7" y="-40" width="13" height="4" rx="2"/></svg>
    <svg viewBox="-66 -70 132 150"><rect x="-50" y="-50" width="100" height="100" rx="23" fill="url(#gSafBg)"/><circle r="43" fill="url(#gSaf)"/><circle r="38" fill="none" stroke="#fff" stroke-width="6" stroke-dasharray="1 2.320" opacity=".8"/><path fill="#e8564b" d="M31-27L5 5-5-5z"/><path fill="#f4f4f4" d="M-29 26L-5-5 5 5z"/></svg>
    <i class="bar"></i>
    <svg class="trash" viewBox="-66 -70 132 150"><path fill="url(#gBin)" d="M-44-46h88l-8 86Q34 55 0 55t-36-15z"/><ellipse cy="-42" rx="44" ry="13" fill="#5e6366"/><path fill="#e9e9ea" d="M-38-46l8-8 8 3 6-8 10 6 8 4 7-9 10 9 8-2 6 16-16 4-12-6-8 8-12-8-14 3z"/><path fill="#6b6f72" d="M-30-44l7-5 4 10-8 3zM-12-52l8 6-6 8zM10-50l6 8-8 4zM22-46l7-3 2 10-8 2z"/><path fill="#55c5d3" d="M-16-46l10-2-4 6z"/><path fill="#c97b45" d="M14-46l5 2-3 8z"/><path fill="#b9bdbf" opacity=".35" d="M-28-25l40 6 14-5L8-2z"/></svg>
  </nav>
</footer>
</body>
</html>
```
FILE: styles.css
```css
* { box-sizing: border-box; }
html, body { margin: 0; height: 1912px; }
body {
  width: 2940px;
  background: #000;
  font-family: Inter, "Noto Sans", sans-serif;
  color: #fff;
  overflow: hidden;
}
.defs { position: absolute; }
svg { display: block; flex: none; }
i { display: block; }

/* menu bar */
.menubar {
  height: 72px;
  background: #323232;
  display: grid;
  align-items: center;
  white-space: nowrap;
  padding-left: 39px;
  font-size: 26px;
  font-weight: 500;
  letter-spacing: -.2px;
  grid-template-columns: 69px 114px 84px 87px 101px 128px 176px 132px 84px 138px 667px 61px 106px 74px 65px 63px 71px 69px 54px 90px 66px 36px 37px 60px 138px 130px;
}
.menubar b { font-weight: 700; }
.menubar b, .menubar span { padding-bottom: 3px; }
.apple { margin-top: -2px; }
.idle { width: 28px; height: 28px; border-radius: 50%; background: #6a6a6a; }
.mic {
  width: 80px; height: 48px; border-radius: 8px; background: #f5a549;
  display: flex; align-items: center; justify-content: center;
}
.amber { width: 10px; height: 10px; border-radius: 50%; background: #d9963f; }
.pct { font-size: 22px; letter-spacing: -.6px; }
.clock { font-weight: 500; color: #f0f0f0; letter-spacing: -.4px; }
.time { word-spacing: -3px; letter-spacing: 0; }

/* browser window */
.window {
  margin-top: 2px;
  width: 2938px;
  height: 1670px;
  border-radius: 20px;
  overflow: hidden;
  border-top: 2px solid #565b61;
  border-right: 3px solid #3f464c;
  background: #353a3c;
}
.tabstrip {
  height: 78px;
  background: #10151d;
  display: flex;
  align-items: flex-start;
  padding-left: 42px;
  font-size: 25px;
  white-space: nowrap;
}
.lights { display: flex; gap: 16px; padding-top: 26px; width: 132px; }
.lights i { width: 24px; height: 24px; border-radius: 50%; background: #f2736a; }
.lights i:nth-child(2) { background: #f5c35b; }
.lights i:nth-child(3) { background: #60cb60; }
.pill {
  position: relative;
  margin-top: 6px; height: 64px; border-radius: 16px;
  display: flex; align-items: center; gap: 6px; padding-left: 24px;
  font-weight: 600; letter-spacing: -.4px;
}
.pill::after {
  content: ""; position: absolute; left: 4px; right: 4px; top: 68px; height: 4px;
  border-radius: 2px 2px 0 0;
}
.pill svg { opacity: .75; }
.green { width: 148px; background: #3f4c45; color: #8bcb9b; letter-spacing: 0; }
.green::after { background: #6a8c75; right: -692px; }
.blue { width: 142px; background: #414b5b; color: #9dbcf8; }
.blue::after { background: #6d7fa9; }
.grey { width: 174px; margin-left: 8px; background: #515255; color: #dcdcde; }
.grey::after { background: #969496; }
.tabs { display: flex; padding-top: 22px; }
.first { margin-left: 5px; width: 699px; --w: 116px; }
.second { margin-left: 5px; --w: 114px; }
.tab {
  width: var(--w); height: 32px; display: flex; align-items: center;
  border-right: 2px solid #50575d; color: #b5b6b8;
}
.tab:last-child { border-right: 0; }
.tab svg, .ps, .sst { margin-left: 28px; }
.tab svg[width="32"], .ps, .sst { margin-left: 27px; }
.tab span {
  width: 20px; height: 32px; line-height: 32px; overflow: hidden; margin-left: auto; margin-right: 19px;
  letter-spacing: -1px;
  -webkit-mask-image: linear-gradient(90deg, #000 50%, rgba(0,0,0,.35));
  mask-image: linear-gradient(90deg, #000 50%, rgba(0,0,0,.35));
}
.ps {
  width: 32px; height: 32px; background: #df423c; border: 2px solid #5560d0;
  font: 17px/27px Roboto, sans-serif; color: #f6d347; text-align: center;
}
.ps em { font-style: normal; color: #fff; }
.sst {
  width: 32px; height: 32px; border-radius: 6px; background: #fff;
  font: 15px/33px Roboto, sans-serif; text-align: center;
}
.sst b { font-weight: 500; color: #d9635c; }
.sst b:nth-child(2) { color: #4a83c0; }
.sst b:nth-child(3) { color: #4c9c72; }
.active {
  margin: 6px 0 0 3px; width: 106px; height: 64px; border-radius: 16px; background: #454c4f;
  display: flex; align-items: center; padding-left: 24px; gap: 22px;
}
.active span {
  width: 19px; overflow: hidden; font-weight: 500; letter-spacing: -2px;
  -webkit-mask-image: linear-gradient(90deg, #000 60%, rgba(0,0,0,.4));
  mask-image: linear-gradient(90deg, #000 60%, rgba(0,0,0,.4));
}
.plus { margin: 27px 0 0 31px; }
.caret { margin: 32px 0 0 118px; }

.toolbar {
  height: 80px;
  display: grid;
  align-items: center;
  padding-left: 28px;
  grid-template-columns: 60px 60px 60px 60px 62px 1962px 60px 60px 60px 60px 60px 49px 119px 158px;
}
.urlbar {
  width: 1932px; height: 64px; border-radius: 16px; background: #10151d;
  display: grid; align-items: center; padding-left: 18px;
  grid-template-columns: 58px 1572px 73px 43px 23px 66px 40px;
}
.url { font-size: 28px; letter-spacing: .28px; color: #c4c6c8; white-space: nowrap; }
.url b { font-weight: 400; color: #fff; }
.sep { width: 2px; height: 32px; background: #c4c6c8; }
.lion { fill: #f06a35; color: #f06a35; }
.vpn {
  width: 110px; height: 56px; border: 2px solid #4b5459; border-radius: 16px;
  display: flex; align-items: center; gap: 8px; padding-left: 13px;
  font-size: 24px; font-weight: 500; letter-spacing: -.5px; color: #e6e7ee;
}
.update {
  width: 158px; height: 64px; border: 2px solid #f8b9b7; border-radius: 16px; background: #474346;
  display: flex; align-items: center; gap: 8px; padding-left: 15px;
  font-size: 26px; color: #f8b9b7; letter-spacing: -.4px; font-weight: 500;
}

.bookmarks {
  height: 70px;
  padding: 0 0 10px 24px;
  display: grid;
  align-items: center;
  grid-template-columns: 98px 118px 76px 175px 56px 31px 164px 308px 308px 308px 308px 308px 333px 56px 31px 220px;
  font-size: 24px; font-weight: 500; letter-spacing: -.28px; white-space: nowrap;
}
.bookmarks i { width: 4px; height: 32px; border-radius: 2px; background: #10151d; }
.bookmarks a { display: flex; align-items: center; gap: 12px; line-height: 30px; }
.bookmarks .all { gap: 13px; }
.tag { height: 40px; line-height: 40px; border-radius: 8px; text-align: center; }
.ibm { width: 82px; background: #4b4657; color: #c08ff0; }
.gm { width: 102px; background: #46534f; color: #8bcb9b; border: 2px solid #74a283; line-height: 36px; }
.ai { width: 60px; background: #544546; color: #ee938d; }
.sw { width: 142px; background: #544b44; color: #f4ae78; }

/* web page */
.page {
  position: relative;
  height: 1440px;
  background: linear-gradient(113deg, #a8f8fd 0%, #9fe3fb 20%, #8dc6fa 70%, #80acf8 100%);
  font-family: "Liberation Sans", Arial, sans-serif;
  color: #000;
}
.page::after {
  content: ""; position: absolute; left: 0; right: 0; bottom: 0; height: 100px;
  background: linear-gradient(90deg, rgba(0,0,0,0), rgba(0,0,0,.11) 6%, rgba(0,0,0,.11) 92%, rgba(0,0,0,0));
  -webkit-mask-image: linear-gradient(transparent, rgba(0,0,0,.35) 50%, #000);
  mask-image: linear-gradient(transparent, rgba(0,0,0,.35) 50%, #000);
}
.card {
  width: 2180px; height: 1446px; margin-left: 378px; padding: 60px 90px 0;
  border-radius: 0 0 24px 24px;
  background: rgba(255,255,255,.9);
  box-shadow: 0 0 24px rgba(0,0,0,.12);
}
h1 {
  margin: 0 0 87px; height: 103px; line-height: 103px; text-align: center;
  font-size: 89.6px; color: #4f8cbf;
}
.field {
  display: block; width: 2054px; border: 2px solid #c5c9cc; border-radius: 12px;
  background: #fff; font: 38.4px "Liberation Sans", Arial, sans-serif; color: #000;
  outline: 0; padding: 0 25px;
}
.name { height: 98px; background: #eaf0fd; margin-bottom: 50px; }
.area { position: relative; width: 2054px; height: 144px; margin-bottom: 61px; }
.area .field {
  height: 144px; resize: none; padding: 25px; overflow: hidden;
  font-family: "DejaVu Sans Mono", monospace; line-height: 46px;
}
.area svg { position: absolute; right: 3px; bottom: 3px; }
.date {
  height: 104px; margin-bottom: 49px; display: flex; align-items: center; justify-content: space-between;
  font-family: "DejaVu Sans Mono", monospace; letter-spacing: 1.1px; padding: 0 33px 0 27px;
}
.date svg { margin-top: -3px; }
.select {
  width: 2000px; height: 103px; border: 5px solid #3270cf; border-radius: 15px; margin-bottom: 24px;
  display: flex; align-items: center; justify-content: space-between; padding: 0 5px 0 32px;
}
.select svg { margin-top: -2px; }
.add {
  display: block; width: 257px; height: 94px; border: 0; border-radius: 12px;
  background: #6bd089; color: #fff; font: 38.4px "Liberation Sans", Arial, sans-serif;
}
h2 { margin: 88px 0 106px; height: 79px; line-height: 79px; font-size: 67.2px; text-indent: -1px; letter-spacing: .3px; }
.back {
  display: block; width: 483px; height: 102px; line-height: 100px; border-radius: 12px;
  text-align: center; background: #5da1dc; color: #fff; font-size: 44.8px;
}

/* dock */
.desktop {
  height: 168px; padding: 4px 0 0 115px;
  background:
    linear-gradient(90deg, rgba(0,0,0,0) 190px, #3a3a3e 190px, #3a3a3e 192px, rgba(0,0,0,0) 192px, rgba(0,0,0,0) 572px, #3a3a3e 572px, #3a3a3e 574px, rgba(0,0,0,0) 574px) 0 158px / 100% 10px no-repeat,
    linear-gradient(90deg, #141418, #1c1c20 190px, #08080a 200px, #000 400px, #1c1c20 570px, #08080a 576px, #000 900px);
}
.dock {
  width: 2711px; height: 154px; border: 2px solid #565656; border-radius: 46px;
  background: #323232; display: flex; padding-left: 3px;
}
.dock svg { width: 132px; height: 150px; overflow: visible; }
.bar { width: 2px; height: 114px; background: #6e6e6e; margin: 18px 28px 0 29px; }
.run { fill: #b9b9b9; }
.badge { fill: #d03a36; }
.n { font: 500 28px Inter, sans-serif; fill: #fff; text-anchor: middle; }
.pc { font: 700 27px Inter, sans-serif; fill: #fff; letter-spacing: -.5px; }
.mon { font: 700 19px Roboto, sans-serif; fill: #fff; text-anchor: middle; }
.day { font: 300 62px Roboto, sans-serif; fill: #3a3a3a; text-anchor: middle; letter-spacing: -1px; }
```
